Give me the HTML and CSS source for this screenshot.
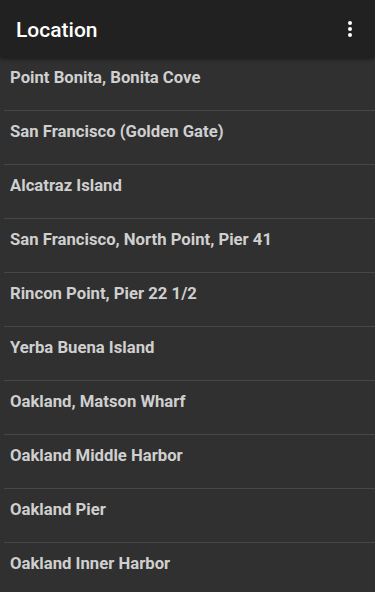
FILE: index.html
```html
<!DOCTYPE html>
<html>
<head>
<meta charset="utf-8">
<link rel="stylesheet" href="styles.css">
</head>
<body>
<div class="app">
  <header class="toolbar">
    <h1 class="title">Location</h1>
    <button class="menu" aria-label="More options">
      <svg width="4" height="16" viewBox="0 0 4 16"><circle cx="2" cy="2" r="2" fill="#fff"/><circle cx="2" cy="8" r="2" fill="#fff"/><circle cx="2" cy="14" r="2" fill="#fff"/></svg>
    </button>
  </header>
  <ul class="list">
    <li class="item">Point Bonita, Bonita Cove</li>
    <li class="item">San Francisco (Golden Gate)</li>
    <li class="item">Alcatraz Island</li>
    <li class="item">San Francisco, North Point, Pier 41</li>
    <li class="item">Rincon Point, Pier 22 1/2</li>
    <li class="item">Yerba Buena Island</li>
    <li class="item">Oakland, Matson Wharf</li>
    <li class="item">Oakland Middle Harbor</li>
    <li class="item">Oakland Pier</li>
    <li class="item">Oakland Inner Harbor</li>
  </ul>
</div>
</body>
</html>
```

FILE: styles.css
```css
html, body {
  margin: 0;
  padding: 0;
  background: #303030;
  height: 100%;
  overflow: hidden;
}
.app {
  font-family: Roboto, "Noto Sans", sans-serif;
  height: 592px;
  overflow: hidden;
}
.toolbar {
  position: relative;
  z-index: 2;
  box-sizing: border-box;
  height: 57px;
  background: #212121;
  display: flex;
  align-items: center;
  justify-content: space-between;
  padding: 2px 0 0 16px;
  box-shadow: 0 2px 4px rgba(0,0,0,0.45);
}
.title {
  margin: 0;
  font-size: 21px;
  font-weight: 500;
  color: #ffffff;
}
.menu {
  width: 48px;
  height: 54px;
  background: none;
  border: 0;
  padding: 0 0 2px;
  display: flex;
  align-items: center;
  justify-content: center;
  margin-right: 1px;
}
.list {
  list-style: none;
  margin: 0;
  padding: 0;
}
.item {
  box-sizing: border-box;
  height: 54px;
  padding: 11px 0 0 10px;
  line-height: 20px;
  font-size: 16.7px;
  font-weight: 700;
  color: #cfcfcf;
  position: relative;
}
.item::after {
  content: "";
  position: absolute;
  left: 4px;
  right: 0;
  bottom: 0;
  height: 1px;
  background: #474747;
}
```
